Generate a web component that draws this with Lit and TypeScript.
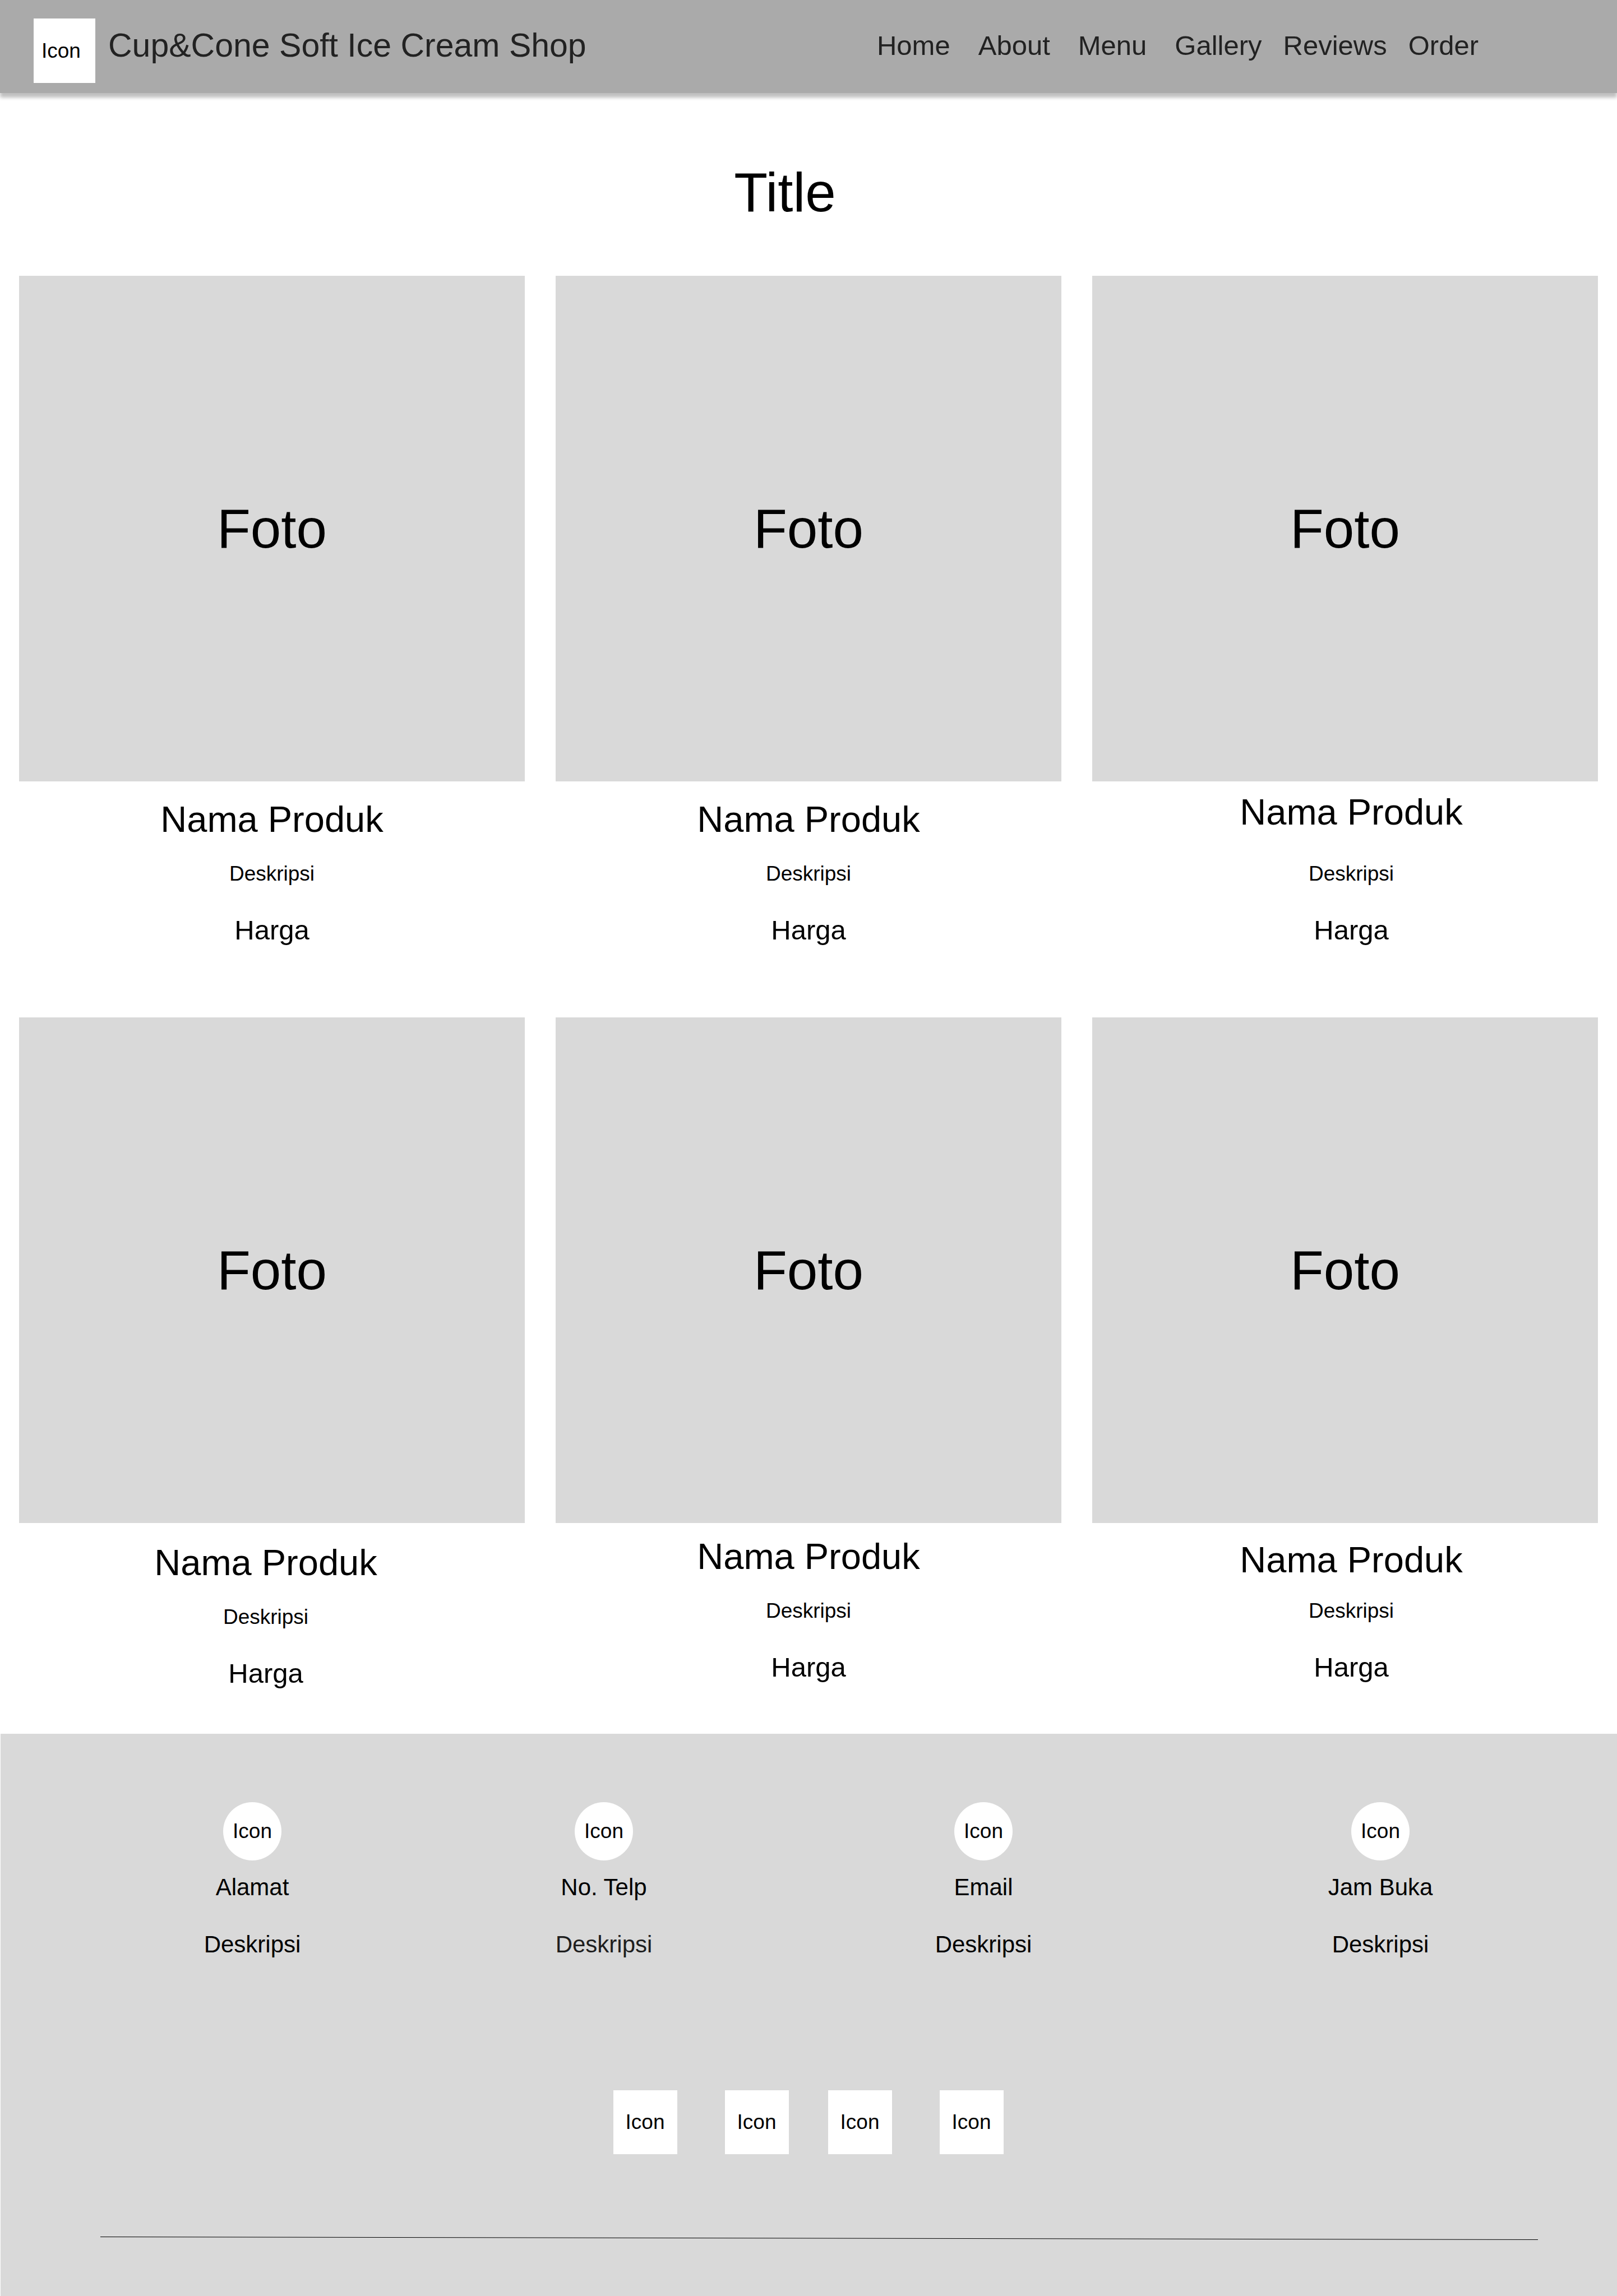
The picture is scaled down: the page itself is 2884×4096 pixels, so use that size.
import { LitElement, html, css } from "lit";
import { customElement, property } from "lit/decorators.js";
import { classMap } from "lit/directives/class-map.js";

type CaptionVariant = "base" | "lifted" | "lowered" | "raised" | "shifted";

interface Product {
  name: string;
  description: string;
  price: string;
  variant: CaptionVariant;
}

interface Contact {
  label: string;
  description: string;
  soft?: boolean;
}

const product = (variant: CaptionVariant): Product => ({
  name: "Nama Produk",
  description: "Deskripsi",
  price: "Harga",
  variant,
});

const PRODUCTS: Product[] = [
  product("base"),
  product("base"),
  product("lifted"),
  product("lowered"),
  product("raised"),
  product("shifted"),
];

const LINKS = ["Home", "About", "Menu", "Gallery", "Reviews", "Order"];

const CONTACTS: Contact[] = [
  { label: "Alamat", description: "Deskripsi" },
  { label: "No. Telp", description: "Deskripsi", soft: true },
  { label: "Email", description: "Deskripsi" },
  { label: "Jam Buka", description: "Deskripsi" },
];

@customElement("site-header")
export class SiteHeader extends LitElement {
  static styles = css`
    :host {
      display: block;
    }
    .bar {
      display: flex;
      align-items: flex-start;
      box-sizing: border-box;
      padding: 33px 247px 18px 60px;
      background: #aaaaaa;
      box-shadow: 0 8px 6px rgba(0, 0, 0, 0.25);
      color: #222222;
    }
    .brand {
      display: flex;
      gap: 23px;
      color: inherit;
      text-decoration: none;
    }
    .logo {
      display: flex;
      align-items: center;
      box-sizing: border-box;
      width: 110px;
      height: 115px;
      padding-left: 14px;
      background: #ffffff;
      color: #000000;
      font-size: 37px;
    }
    .name {
      font-size: 59px;
      line-height: 96px;
      white-space: nowrap;
    }
    .nav {
      margin-left: auto;
    }
    .links {
      display: flex;
      margin: 0;
      padding: 0;
      list-style: none;
      font-size: 49px;
      line-height: 96px;
    }
    .item {
      margin-left: 50px;
    }
    .item:first-child {
      margin-left: 0;
    }
    .item:nth-child(n + 5) {
      margin-left: 38px;
    }
    .link {
      color: inherit;
      text-decoration: none;
    }
  `;

  render() {
    return html`
      <header class="bar">
        <a class="brand" href="#home">
          <span class="logo">Icon</span>
          <span class="name">Cup&amp;Cone Soft Ice Cream Shop</span>
        </a>
        <nav class="nav">
          <ul class="links">
            ${LINKS.map(
              (l) => html`<li class="item"><a class="link" href="#${l.toLowerCase()}">${l}</a></li>`
            )}
          </ul>
        </nav>
      </header>
    `;
  }
}

@customElement("product-card")
export class ProductCard extends LitElement {
  @property({ attribute: false }) product!: Product;

  static styles = css`
    :host {
      display: block;
    }
    .photo {
      display: flex;
      align-items: center;
      justify-content: center;
      aspect-ratio: 1;
      background: #d9d9d9;
      font-size: 98px;
    }
    .caption {
      display: flex;
      flex-direction: column;
      align-items: center;
      padding-top: 30px;
    }
    .name,
    .description,
    .price {
      margin: 0;
      font-weight: 400;
    }
    .name {
      margin-bottom: 37px;
      font-size: 65px;
      line-height: 76px;
    }
    .description {
      margin-bottom: 50px;
      font-size: 37px;
      line-height: 44px;
    }
    .price {
      font-size: 49px;
      line-height: 56px;
    }
    .lifted {
      padding-top: 17px;
      padding-left: 22px;
    }
    .lifted .name {
      margin-bottom: 50px;
    }
    .lowered {
      padding-top: 33px;
      padding-right: 22px;
    }
    .raised {
      padding-top: 22px;
    }
    .shifted {
      padding-top: 28px;
      padding-left: 22px;
    }
    .shifted .name {
      margin-bottom: 31px;
    }
  `;

  render() {
    const p = this.product;
    return html`
      <article>
        <div class="photo">Foto</div>
        <div class=${classMap({ caption: true, [p.variant]: true })}>
          <h2 class="name">${p.name}</h2>
          <p class="description">${p.description}</p>
          <p class="price">${p.price}</p>
        </div>
      </article>
    `;
  }
}

@customElement("site-footer")
export class SiteFooter extends LitElement {
  static styles = css`
    :host {
      display: block;
    }
    .footer {
      margin-left: 1px;
      padding: 122px 0 100px;
      background: #d9d9d9;
    }
    .contacts {
      display: grid;
      grid-template-columns: 610fr 644fr 710fr 706fr;
      padding: 0 69px 0 144px;
    }
    .contact {
      display: flex;
      flex-direction: column;
      align-items: center;
      font-size: 42px;
      line-height: 48px;
    }
    .badge {
      display: flex;
      align-items: center;
      justify-content: center;
      width: 104px;
      height: 104px;
      border-radius: 50%;
      background: #ffffff;
      font-size: 37px;
    }
    .label,
    .detail {
      margin: 0;
      font-size: 42px;
      font-weight: 400;
    }
    .label {
      margin: 24px 0 54px;
    }
    .soft {
      color: #1e1e1e;
    }
    .social {
      display: flex;
      justify-content: center;
      gap: 70px;
      margin-top: 236px;
      padding-right: 2px;
    }
    .pair {
      display: flex;
      gap: 85px;
    }
    .tile {
      display: flex;
      align-items: center;
      justify-content: center;
      width: 114px;
      height: 114px;
      background: #ffffff;
      color: #000000;
      font-size: 37px;
      text-decoration: none;
    }
    .divider {
      padding: 147px 141px 0 178px;
    }
    .rule {
      display: block;
      width: 100%;
      height: 6px;
    }
  `;

  private tile() {
    return html`<a class="tile" href="#social">Icon</a>`;
  }

  render() {
    return html`
      <footer class="footer">
        <div class="contacts">
          ${CONTACTS.map(
            (c) => html`
              <section class="contact">
                <span class="badge">Icon</span>
                <h3 class="label">${c.label}</h3>
                <p class=${classMap({ detail: true, soft: !!c.soft })}>${c.description}</p>
              </section>
            `
          )}
        </div>
        <div class="social">
          <div class="pair">${this.tile()}${this.tile()}</div>
          <div class="pair">${this.tile()}${this.tile()}</div>
        </div>
        <div class="divider">
          <svg class="rule" viewBox="0 0 2564 6" preserveAspectRatio="none" aria-hidden="true">
            <line x1="0" y1="0.5" x2="2564" y2="5.5" stroke="#000000" stroke-width="1" vector-effect="non-scaling-stroke" />
          </svg>
        </div>
      </footer>
    `;
  }
}

@customElement("app-root")
export class AppRoot extends LitElement {
  static styles = css`
    :host {
      display: block;
      background: #ffffff;
      color: #000000;
      font-family: "Liberation Sans", Arial, sans-serif;
    }
    .title {
      margin: 0;
      padding: 121px 84px 93px 0;
      font-size: 98px;
      font-weight: 400;
      line-height: 112px;
      text-align: center;
    }
    .products {
      display: grid;
      grid-template-columns: repeat(3, minmax(0, 1fr));
      gap: 128px 55px;
      padding: 0 34px 80px;
    }
  `;

  render() {
    return html`
      <site-header></site-header>
      <main>
        <h1 class="title">Title</h1>
        <div class="products">
          ${PRODUCTS.map((p) => html`<product-card .product=${p}></product-card>`)}
        </div>
      </main>
      <site-footer></site-footer>
    `;
  }
}
